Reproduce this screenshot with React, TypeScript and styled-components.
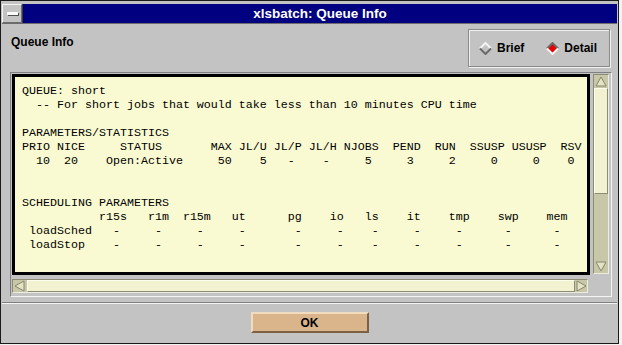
import React from 'react'
import styled, { createGlobalStyle } from 'styled-components'

const GlobalStyle = createGlobalStyle`
  html, body {
    margin: 0;
    padding: 0;
    background: #f2f2f2;
  }
  body {
    width: 622px;
    height: 345px;
    overflow: hidden;
    font-family: 'Liberation Sans', Arial, sans-serif;
  }
`

const Window = styled.div`
  box-sizing: border-box;
  width: 619px;
  height: 344px;
  border: 1px solid #1a1a1a;
  padding: 3px 1px 2px 1px;
  background: #c3c3c3;
  display: flex;
  flex-direction: column;
`

const TitleBar = styled.div`
  display: flex;
  flex: none;
  height: 19px;
  gap: 1px;
  background: #3a3a3a;
`

const MenuButton = styled.div`
  box-sizing: border-box;
  width: 20px;
  background: #c3c3c3;
  border: 1px solid;
  border-color: #f4f4f4 #6c6c6c #6c6c6c #f4f4f4;
  display: flex;
  align-items: center;
  justify-content: center;
`

const MenuBar = styled.div`
  width: 11px;
  height: 3px;
  background: #fafafa;
  box-shadow: 1px 1px 0 #505050;
`

const Title = styled.div`
  flex: 1;
  background: #000080;
  color: #fff;
  font: bold 13.5px 'Liberation Sans', Arial, sans-serif;
  display: flex;
  align-items: center;
  justify-content: center;
`

const Client = styled.div`
  flex: 1;
  display: flex;
  flex-direction: column;
  border-top: 1px solid #6c6c6c;
`

const TopRow = styled.div`
  box-sizing: border-box;
  display: flex;
  justify-content: space-between;
  align-items: flex-start;
  height: 48px;
  padding: 5px 7px 0 9px;
`

const Label = styled.div`
  margin-top: 6px;
  font: bold 12px 'Liberation Sans', Arial, sans-serif;
  line-height: 14px;
  color: #000;
`

const RadioBox = styled.div`
  box-sizing: border-box;
  width: 142px;
  height: 38px;
  display: flex;
  align-items: center;
  padding-left: 10px;
  border: 1px solid #8a8a8a;
  box-shadow: inset 1px 1px 0 #f0f0f0, 1px 1px 0 #f0f0f0;
`

const RadioItem = styled.div`
  display: flex;
  align-items: center;
  gap: 5px;
  margin-right: 22px;
  font: bold 12px 'Liberation Sans', Arial, sans-serif;
  color: #000;
`

const Panel = styled.div`
  box-sizing: border-box;
  width: 602px;
  height: 225px;
  margin-left: 8px;
  border: 1px solid;
  border-color: #808080 #f4f4f4 #f4f4f4 #808080;
  padding: 1px 2px 3px 1px;
  display: grid;
  grid-template-columns: 578px 16px;
  grid-template-rows: 201px 14px;
  column-gap: 3px;
  row-gap: 4px;
`

const TextArea = styled.pre`
  box-sizing: border-box;
  margin: 0;
  border: 3px solid #000;
  background: #fafad2;
  padding: 7px 0 0 7px;
  font: 11.667px 'Liberation Mono', 'Courier New', monospace;
  line-height: 14px;
  color: #000;
  white-space: pre;
  overflow: hidden;
`

const ScrollBar = styled.div<{ $vertical?: boolean }>`
  box-sizing: border-box;
  display: flex;
  flex-direction: ${(p) => (p.$vertical ? 'column' : 'row')};
  background: #c8c8a8;
  border: 1px solid;
  border-color: #8c8c74 #ecece0 #ecece0 #8c8c74;
  ${(p) => (p.$vertical ? 'height: 200px;' : 'width: 576px;')}
`

const ArrowButton = styled.div<{ $vertical?: boolean }>`
  flex: none;
  display: flex;
  align-items: center;
  justify-content: center;
  ${(p) => (p.$vertical ? 'height: 13px;' : 'width: 14px;')}
`

const Track = styled.div<{ $vertical?: boolean }>`
  flex: 1;
  display: flex;
  flex-direction: ${(p) => (p.$vertical ? 'column' : 'row')};
`

const Thumb = styled.div<{ $size: number; $vertical?: boolean }>`
  box-sizing: border-box;
  flex: none;
  background: #f2f2d0;
  border: 1px solid;
  border-color: #fdfdf0 #8c8c74 #8c8c74 #fdfdf0;
  ${(p) => (p.$vertical ? `height: ${p.$size}px;` : `width: ${p.$size}px;`)}
`

const Separator = styled.div`
  margin-top: 5px;
  border-top: 1px solid #808080;
  border-bottom: 1px solid #f4f4f4;
`

const ButtonRow = styled.div`
  display: flex;
  justify-content: center;
  padding-top: 8px;
`

const OkButton = styled.button`
  box-sizing: border-box;
  width: 118px;
  height: 21px;
  padding: 0;
  background: #dab58b;
  border: 2px solid;
  border-color: #f2dcc0 #7d6145 #7d6145 #f2dcc0;
  font: bold 12px 'Liberation Sans', Arial, sans-serif;
  color: #000;
`

const Diamond = ({ on }: { on: boolean }) => (
  <svg width="13" height="13" viewBox="0 0 13 13">
    <polygon points="6.5,1 12,6.5 6.5,12 1,6.5" fill={on ? '#e80000' : '#c3c3c3'} />
    <polyline
      points="1,6.5 6.5,1 12,6.5"
      fill="none"
      stroke={on ? '#6a6a6a' : '#f4f4f4'}
      strokeWidth="2"
    />
    <polyline
      points="1,6.5 6.5,12 12,6.5"
      fill="none"
      stroke={on ? '#f4f4f4' : '#6a6a6a'}
      strokeWidth="2"
    />
  </svg>
)

const Arrow = ({ dir }: { dir: 'up' | 'down' | 'left' | 'right' }) => {
  const pts = {
    up: '6,1 11,10 1,10',
    down: '1,1 11,1 6,10',
    left: '1,6 10,1 10,11',
    right: '1,1 10,6 1,11',
  }[dir]
  return (
    <svg width="12" height="12" viewBox="0 0 12 12">
      <polygon points={pts} fill="#e4e4c4" stroke="#86866e" strokeWidth="1" />
    </svg>
  )
}

// put each piece of text at its column, like the fixed-width lsb output
const row = (cells: [number, string][]) =>
  cells.reduce((s, [col, text]) => s.padEnd(col) + text, '')

const dashes = [13, 19, 25, 31, 39, 45, 50, 56, 62, 69, 76]

const lines = [
  'QUEUE: short',
  row([[2, '-- For short jobs that would take less than 10 minutes CPU time']]),
  '',
  'PARAMETERS/STATISTICS',
  row([
    [0, 'PRIO'], [5, 'NICE'], [14, 'STATUS'], [27, 'MAX'], [31, 'JL/U'],
    [36, 'JL/P'], [41, 'JL/H'], [46, 'NJOBS'], [53, 'PEND'], [59, 'RUN'],
    [64, 'SSUSP'], [70, 'USUSP'], [77, 'RSV'],
  ]),
  row([
    [2, '10'], [6, '20'], [12, 'Open:Active'], [28, '50'], [34, '5'],
    [38, '-'], [43, '-'], [49, '5'], [55, '3'], [61, '2'],
    [67, '0'], [73, '0'], [78, '0'],
  ]),
  '',
  '',
  'SCHEDULING PARAMETERS',
  row([
    [11, 'r15s'], [18, 'r1m'], [23, 'r15m'], [30, 'ut'], [38, 'pg'],
    [44, 'io'], [49, 'ls'], [55, 'it'], [61, 'tmp'], [68, 'swp'], [75, 'mem'],
  ]),
  row([[1, 'loadSched'], ...dashes.map((c) => [c, '-'] as [number, string])]),
  row([[1, 'loadStop'], ...dashes.map((c) => [c, '-'] as [number, string])]),
]

const App = () => {
  return (
    <>
      <GlobalStyle />
      <Window>
        <TitleBar>
          <MenuButton>
            <MenuBar />
          </MenuButton>
          <Title>xlsbatch: Queue Info</Title>
        </TitleBar>
        <Client>
          <TopRow>
            <Label>Queue Info</Label>
            <RadioBox>
              <RadioItem>
                <Diamond on={false} />
                Brief
              </RadioItem>
              <RadioItem>
                <Diamond on />
                Detail
              </RadioItem>
            </RadioBox>
          </TopRow>
          <Panel>
            <TextArea>{lines.join('\n')}</TextArea>
            <ScrollBar $vertical>
              <ArrowButton $vertical>
                <Arrow dir="up" />
              </ArrowButton>
              <Track $vertical>
                <Thumb $vertical $size={106} />
              </Track>
              <ArrowButton $vertical>
                <Arrow dir="down" />
              </ArrowButton>
            </ScrollBar>
            <ScrollBar>
              <ArrowButton>
                <Arrow dir="left" />
              </ArrowButton>
              <Track>
                <Thumb $size={548} />
              </Track>
              <ArrowButton>
                <Arrow dir="right" />
              </ArrowButton>
            </ScrollBar>
          </Panel>
          <Separator />
          <ButtonRow>
            <OkButton>OK</OkButton>
          </ButtonRow>
        </Client>
      </Window>
    </>
  )
}

export default App
